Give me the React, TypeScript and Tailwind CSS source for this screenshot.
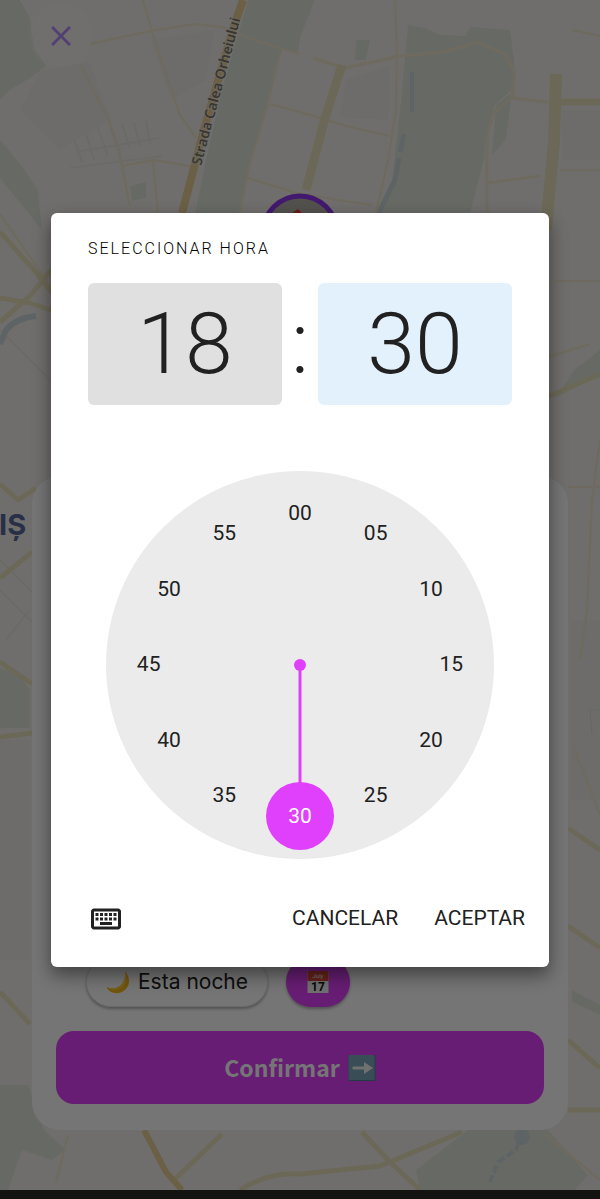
import { MdClose, MdOutlineKeyboard } from 'react-icons/md'

const MINUTES = ['00', '05', '10', '15', '20', '25', '30', '35', '40', '45', '50', '55']
const SELECTED = '30'

// distance of the labels from the dial centre, in % of the dial width
const LABEL_RADIUS = 39

function MapBackground() {
  return (
    <svg
      className="absolute inset-0 w-full h-full"
      viewBox="0 0 600 1199"
      preserveAspectRatio="xMidYMid slice"
      aria-hidden="true"
    >
      <rect width="600" height="1199" fill="#f3f0eb" />

      {/* parks */}
      <g fill="#e0e8da">
        <path d="M0 0H20L30 18L34 48L46 66L30 78L10 90L0 100Z" />
        <path d="M0 140L22 166L38 190L42 230L0 178Z" />
        <path d="M248 0H315L300 38L298 52L282 50L268 100L248 170L240 213H195L206 160L222 90Z" />
        <path d="M408 25L425 28L440 35L466 36L470 27L510 30L514 60V88L495 105L487 130L484 160L470 213H378L392 180L400 110Z" />
        <path d="M356 40H370L366 60H355Z" />
        <path d="M496 105L512 92L506 140L492 155Z" />
        <path d="M0 668Q18 672 30 690V728H0Z" />
        <path d="M0 1085H28L44 1130L66 1150L52 1160L22 1150L8 1190H0Z" />
        <path d="M468 1130H548L588 1175L575 1190H420L416 1170Z" />
        <path d="M574 370L600 350V374L556 398Z" />
        <path d="M572 990L600 1005V1015L572 1002Z" />
        <path d="M130 186L146 182V198L132 201Z" />
      </g>

      {/* built-up blocks */}
      <g fill="#f0ece8">
        <path d="M40 70L90 62L110 120L60 150L20 110Z" />
        <path d="M150 40L214 30L206 80L172 100Z" />
        <path d="M345 80L390 65L388 120L340 118Z" />
        <path d="M562 110H600V160H562Z" />
        <path d="M0 740H30V960H0Z" />
        <path d="M570 620H600V800H570Z" />
      </g>
      <g stroke="#ebe7e1" strokeWidth="2" fill="none">
        <path d="M74 140L82 162M86 134L94 160M98 128L108 156M110 126L118 150M122 124L130 148M134 122L140 146M146 120L150 144M76 152L160 138M70 168L162 156" />
        <path d="M0 590L50 640M0 560L40 600M6 640L30 610M0 330L50 380" />
      </g>

      {/* water */}
      <g fill="none" stroke="#ccdadd" strokeWidth="4">
        <path d="M412 72V112" />
        <path d="M404 134L400 152M399 158L395 180L386 198L379 213" strokeWidth="5" />
        <path d="M36 316Q16 318 6 330L0 344" strokeWidth="6" />
        <path d="M522 1132L516 1150L498 1162L490 1182" strokeWidth="4" strokeDasharray="8 3" />
      </g>
      <circle cx="522" cy="1137" r="8" fill="#ccdadd" />

      {/* minor roads */}
      <g fill="none" stroke="#f0e8cf" strokeWidth="2.5" strokeLinejoin="round">
        <path d="M90 44L150 31L195 24L222 27L260 42L300 54" />
        <path d="M143 0L156 45L180 115L196 138" />
        <path d="M81 66L108 118L118 146L130 206" />
        <path d="M122 166L154 160L195 167M153 160L158 213" />
        <path d="M280 52L268 104L248 170L240 213M270 104L300 112L350 127L390 136" />
        <path d="M395 0L397 50L396 110L388 160L376 213" />
        <path d="M313 58L345 68L400 56L444 52L478 42L505 54L514 72L512 98L548 102" strokeWidth="3.5" />
        <path d="M512 98L494 112L487 135L487 213M487 183L540 176" strokeWidth="3" />
        <path d="M572 30L600 36M560 170H600M556 281H600M545 358L590 344M568 487H600" />
        <path d="M600 440L592 500L587 610L580 660M575 750L600 815" />
        <path d="M248 178L300 194L372 205" />
        <path d="M68 1136L56 1182M0 214L60 300M545 1134L600 1180" />
      </g>
      <path d="M600 710H590L592 735" fill="none" stroke="#d7e2db" strokeWidth="1" />

      {/* main roads */}
      <g fill="none" stroke="#ebe2bd" strokeWidth="5" strokeLinejoin="round">
        <path d="M342 65L325 118L306 190" strokeWidth="9" />
        <path d="M556 74L554 140L546 230" strokeWidth="12" />
        <path d="M556 102H600" strokeWidth="7" />
        <path d="M0 298L30 303L51 310M0 322L30 296L51 270M0 232L34 270L51 292" />
        <path d="M545 398L600 374" />
        <path d="M0 484L18 500L36 488M0 578L32 552M0 662L32 684M0 737L32 733" />
        <path d="M568 828L600 850M568 926L600 948M568 1040L600 1068M568 1110H600" />
        <path d="M0 992L30 1024" />
        <path d="M172 1182L222 1134M240 1190Q268 1172 300 1174L380 1166L462 1132" />
        <path d="M362 1132L390 1162L420 1190" />
      </g>

      <g fill="none" stroke="#ead29a" strokeWidth="8" strokeLinejoin="round">
        <path d="M243 0L232 32L204 130L182 213" />
        <path d="M144 1130L166 1172L182 1190" strokeWidth="6" />
      </g>

      {/* halo behind the close button */}
      <circle cx="61" cy="36" r="32" fill="#fff" fillOpacity="0.12" />

      <text
        transform="translate(201 166) rotate(-75)"
        className="text-[14px] font-semibold font-['Open_Sans',sans-serif]"
        fill="#77736c"
        stroke="#f3f0eb"
        strokeOpacity="0.5"
        strokeWidth="2"
        paintOrder="stroke"
      >
        Strada Calea Orheiului
      </text>
      <text x="-1" y="535" className="text-[29px] font-bold font-['Inter',sans-serif]" fill="#566a9c">
        IȘ
      </text>

      {/* position marker */}
      <circle cx="300" cy="233" r="37" fill="#b5b0a8" stroke="#9038f0" strokeWidth="5" />
      <path d="M292 213L298 209L302 213Z" fill="#e53935" />
    </svg>
  )
}

function MoonIcon() {
  return (
    <svg viewBox="0 0 24 24" className="w-6 h-6" aria-hidden="true">
      <path d="M19 1C24 7 24.500 14 19.500 19.500C14 25 4 24.500 0.500 17C7 20 13.500 17.500 16.500 13C19 9 19.500 5 19 1Z" fill="#fbb91c" />
      <path d="M19 1C22 8 20 14 15 17.500C10 21 5 20.500 0.500 17C7 20 13.500 17.500 16.500 13C19 9 19.500 5 19 1Z" fill="#fdd44a" />
    </svg>
  )
}

function CalendarIcon() {
  return (
    <svg viewBox="0 0 22 24" className="w-[22px] h-6" aria-hidden="true">
      <rect x="0.500" y="1" width="21" height="22" fill="#f5f5f5" />
      <rect x="0.500" y="1" width="21" height="10" fill="#dc4a3c" />
      <text x="11" y="8" textAnchor="middle" className="text-[6px] font-['Roboto',sans-serif]" fill="#fff">
        July
      </text>
      <text x="11" y="21" textAnchor="middle" className="text-[12px] font-bold font-['Roboto',sans-serif]" fill="#111">
        17
      </text>
    </svg>
  )
}

function ArrowIcon() {
  return (
    <svg viewBox="0 0 28 28" className="w-7 h-7" aria-hidden="true">
      <rect x="0.500" y="1" width="27" height="26" rx="1" fill="#4e8296" />
      <rect x="0.500" y="1" width="26" height="25" rx="1" fill="#7ba9bb" />
      <path d="M5 12.500H16V8L25 14L16 20V15.500H5Q3.500 14 5 12.500Z" fill="#f5f5f5" />
    </svg>
  )
}

function BookingSheet() {
  return (
    <section className="relative mt-auto mx-8 mb-15 min-h-[654px] rounded-[28px] bg-white px-6 pb-[26px] flex flex-col justify-end gap-6 font-['Inter',sans-serif]">
      <div className="flex gap-[18px] pl-[30px] text-[21px] text-[#222]">
        <button className="h-[50px] px-[19px] rounded-full bg-white border border-gray-200 shadow-[0_2px_3px_rgba(0,0,0,0.3)] flex items-center gap-2">
          <MoonIcon />
          <span>Esta noche</span>
        </button>
        <button
          aria-label="Elegir fecha"
          className="h-[50px] px-[21px] rounded-full bg-[#e040fb] shadow-[0_2px_3px_rgba(0,0,0,0.3)] flex items-center"
        >
          <CalendarIcon />
        </button>
      </div>
      <button className="h-[73px] rounded-[18px] bg-[#e040fb] text-white text-[23px] font-bold font-['Noto_Sans_CJK_SC',sans-serif] flex items-center justify-center gap-2">
        <span>Confirmar</span>
        <ArrowIcon />
      </button>
    </section>
  )
}

function Dial() {
  return (
    <div className="relative w-full aspect-square rounded-full bg-[#ebebeb]">
      <svg viewBox="0 0 388 388" className="absolute inset-0 w-full h-full" aria-hidden="true">
        <path d="M194 194V345" stroke="#e040fb" strokeWidth="3" />
        <circle cx="194" cy="194" r="6" fill="#e040fb" />
        <circle cx="194" cy="345" r="34" fill="#e040fb" />
      </svg>
      {MINUTES.map((minute, i) => {
        const angle = (i / MINUTES.length) * 2 * Math.PI
        return (
          <button
            key={minute}
            className={
              minute === SELECTED
                ? 'absolute -translate-x-1/2 -translate-y-1/2 size-12 text-[21px] text-white'
                : 'absolute -translate-x-1/2 -translate-y-1/2 size-12 text-[21px]'
            }
            style={{
              left: `${50 + LABEL_RADIUS * Math.sin(angle)}%`,
              top: `${50 - LABEL_RADIUS * Math.cos(angle)}%`,
            }}
          >
            {minute}
          </button>
        )
      })}
    </div>
  )
}

function TimeDialog() {
  return (
    <div
      role="dialog"
      aria-labelledby="time-title"
      className="w-full max-w-[498px] rounded-md bg-white pt-6 pb-[18px] shadow-[0_8px_18px_rgba(0,0,0,0.45)] font-['Roboto',sans-serif] text-[#212121]"
    >
      <h2 id="time-title" className="px-[37px] text-base leading-6 font-light tracking-[2px] text-black">
        SELECCIONAR HORA
      </h2>

      <div className="mt-[22px] px-[37px] flex items-center text-[86px] leading-none font-light">
        <button className="flex-1 h-[122px] rounded-md bg-[#e0e0e0]">18</button>
        <span className="w-9 text-center">:</span>
        <button className="flex-1 h-[122px] rounded-md bg-[#e3f1fd]">30</button>
      </div>

      <div className="mt-[66px] px-[55px]">
        <Dial />
      </div>

      <div className="mt-[30px] pl-[37px] pr-6 h-[60px] flex items-center text-[21px]">
        <button aria-label="Cambiar al modo de texto">
          <MdOutlineKeyboard size={36} />
        </button>
        <button className="ml-auto">CANCELAR</button>
        <button className="ml-9">ACEPTAR</button>
      </div>
    </div>
  )
}

export default function App() {
  return (
    <div className="relative min-h-screen flex flex-col bg-[#f3f0eb]">
      <MapBackground />
      <header className="relative px-11 py-[19px]">
        <button aria-label="Cerrar" className="block text-[#b48cff]">
          <MdClose size={34} />
        </button>
      </header>
      <BookingSheet />
      <div className="relative h-[9px] bg-[#2a2d29]" />

      <div className="absolute inset-0 bg-black/54 flex items-center justify-center px-4 pb-[19px]">
        <TimeDialog />
      </div>
    </div>
  )
}
